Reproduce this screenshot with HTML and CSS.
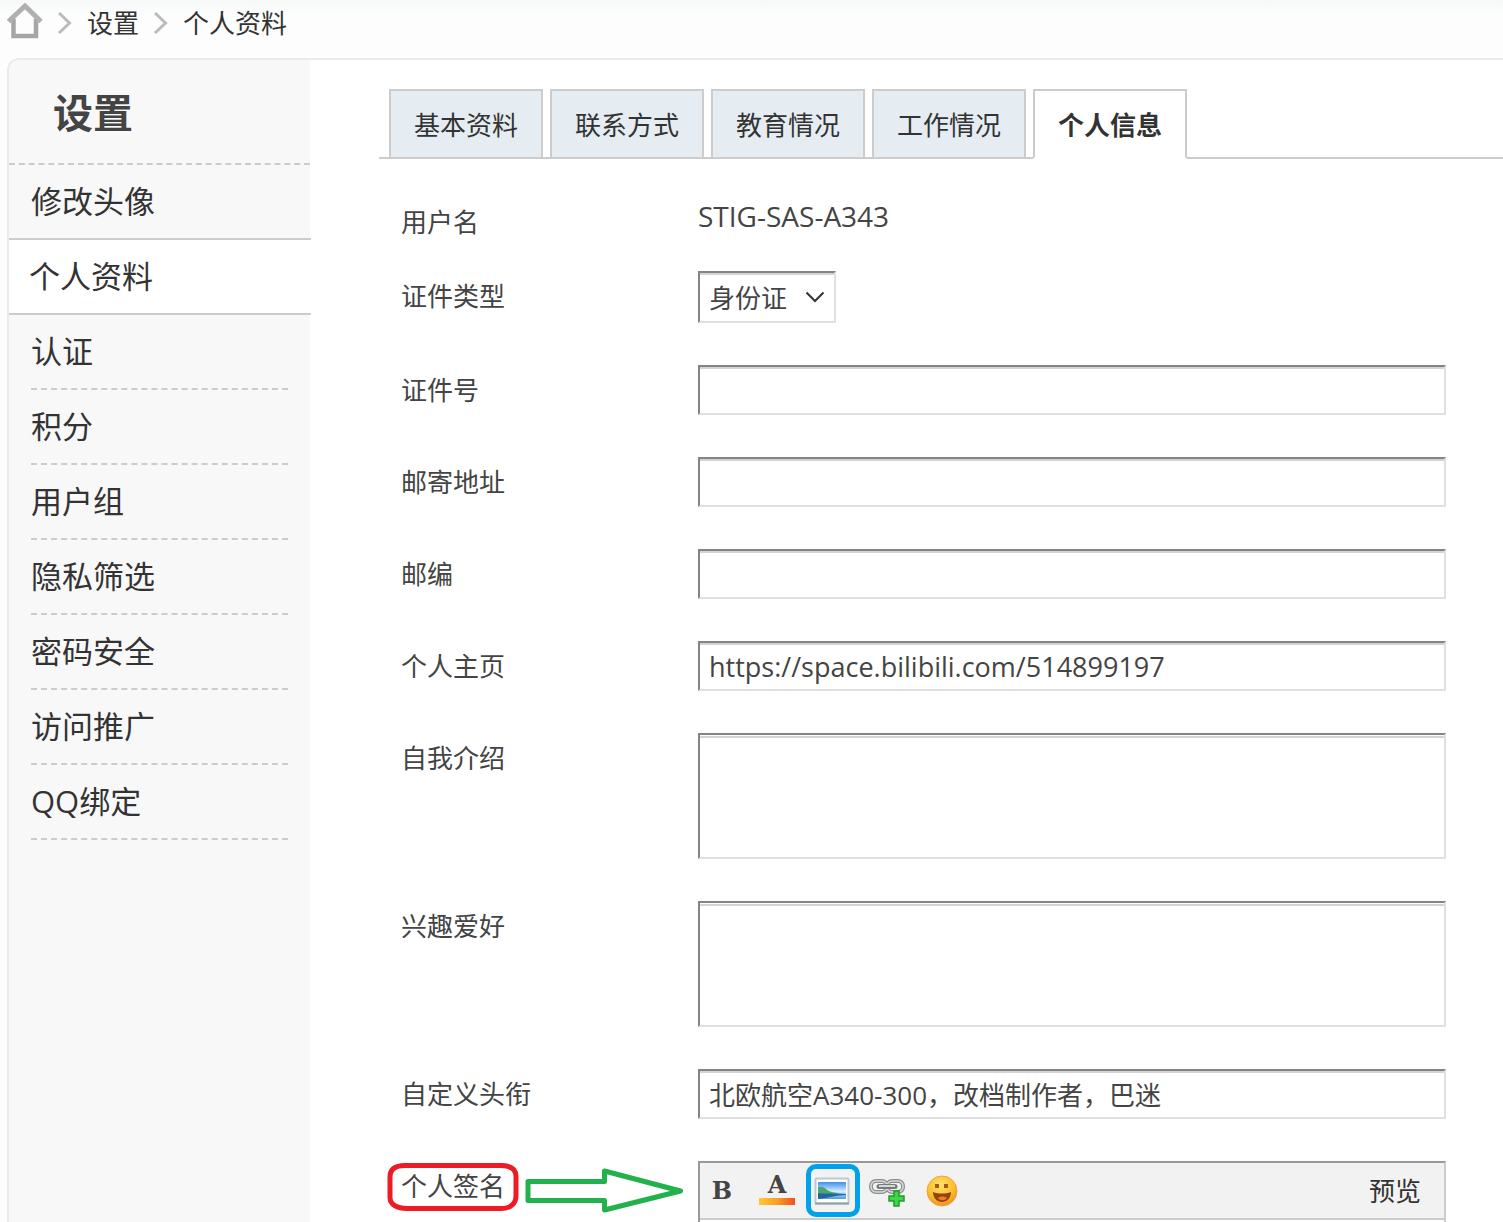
FILE: index.html
```html
<!DOCTYPE html>
<html lang="zh-CN">
<head>
<meta charset="utf-8">
<meta name="viewport" content="width=device-width, initial-scale=1">
<title>个人资料</title>
<link rel="stylesheet" href="styles.css">
</head>
<body>
<nav class="crumbs" aria-label="位置">
  <a class="home" href="#" aria-label="首页"><svg width="36" height="36" viewBox="0 0 36 36"><path d="M18 3 2 17.500h4.500V33h22.500V17.500H34z" fill="#fdfdfd"/><path d="M6.500 16v17h22.500V16" fill="none" stroke="#a6a6a6" stroke-width="4.500"/><path d="M1.500 18.500 18 3l16 15.500" fill="none" stroke="#b0b0b0" stroke-width="5"/></svg></a>
  <svg class="sep" width="14" height="22" viewBox="0 0 14 22"><path d="M1 1l10.500 10L1 21" fill="none" stroke="#bcbcbc" stroke-width="3"/></svg>
  <a href="#">设置</a>
  <svg class="sep" width="14" height="22" viewBox="0 0 14 22"><path d="M1 1l10.500 10L1 21" fill="none" stroke="#bcbcbc" stroke-width="3"/></svg>
  <a href="#">个人资料</a>
</nav>
<div class="panel">
  <aside class="side">
    <h2>设置</h2>
    <ul>
      <li><a href="#">修改头像</a></li>
      <li class="on"><a href="#">个人资料</a></li>
      <li><a href="#">认证</a></li>
      <li><a href="#">积分</a></li>
      <li><a href="#">用户组</a></li>
      <li><a href="#">隐私筛选</a></li>
      <li><a href="#">密码安全</a></li>
      <li><a href="#">访问推广</a></li>
      <li><a href="#">QQ绑定</a></li>
    </ul>
  </aside>
  <main class="main">
    <ul class="tabs">
      <li><a href="#">基本资料</a></li>
      <li><a href="#">联系方式</a></li>
      <li><a href="#">教育情况</a></li>
      <li><a href="#">工作情况</a></li>
      <li class="on"><a href="#">个人信息</a></li>
    </ul>
    <form class="form">
      <div class="row name-row"><span class="label">用户名</span><span class="value">STIG-SAS-A343</span></div>
      <div class="row">
        <label class="label" for="idtype">证件类型</label>
        <span class="select"><select id="idtype"><option>身份证</option></select><svg width="20" height="12" viewBox="0 0 20 12"><path d="M1.500 1.500 10 10l8.500-8.500" fill="none" stroke="#333" stroke-width="2"/></svg></span>
      </div>
      <div class="row"><label class="label" for="idno">证件号</label><input class="field" id="idno" type="text"></div>
      <div class="row"><label class="label" for="addr">邮寄地址</label><input class="field" id="addr" type="text"></div>
      <div class="row"><label class="label" for="zip">邮编</label><input class="field" id="zip" type="text"></div>
      <div class="row"><label class="label" for="site">个人主页</label><input class="field url" id="site" type="text" value="https://space.bilibili.com/514899197"></div>
      <div class="row"><label class="label" for="bio">自我介绍</label><textarea class="field area" id="bio"></textarea></div>
      <div class="row"><label class="label" for="hobby">兴趣爱好</label><textarea class="field area" id="hobby"></textarea></div>
      <div class="row"><label class="label" for="rank">自定义头衔</label><input class="field" id="rank" type="text" value="北欧航空A340-300，改档制作者，巴迷"></div>
      <div class="row sign-row">
        <label class="label" for="sign">个人签名</label>
        <div class="editor">
          <div class="toolbar">
            <button type="button" aria-label="粗体"><span class="bold">B</span></button>
            <button type="button" aria-label="颜色"><span class="color">A</span></button>
            <button type="button" class="marked" aria-label="图片">
              <svg width="36" height="28" viewBox="0 0 36 28">
                <defs>
                  <linearGradient id="sky" x1="0" y1="0" x2="0" y2="1"><stop offset="0" stop-color="#3f8cf0"/><stop offset=".55" stop-color="#d4efff"/><stop offset="1" stop-color="#4d9ae4"/></linearGradient>
                </defs>
                <rect x="1.500" y="1.500" width="33" height="25" rx="1" fill="#fff" stroke="#bccacb" stroke-width="2"/>
                <path d="M1 26.500h34" stroke="#8fa0a2" stroke-width="2"/>
                <rect x="4" y="5" width="28" height="17" fill="url(#sky)"/>
                <path d="M4 10c4-1 7 0 9 3 3 2 8 3 12 3l-9 2-12 2z" fill="#4fa56f"/>
                <path d="M4 16c6 1 16 0 28 1v1c-10 0-17 3-28 4z" fill="#22669a"/>
              </svg>
            </button>
            <button type="button" aria-label="链接">
              <svg width="38" height="32" viewBox="0 0 38 32">
                <g fill="none" stroke="#8b8f8f" stroke-width="4"><rect x="3" y="6" width="16" height="11" rx="5"/><rect x="19" y="6" width="16" height="11" rx="5"/></g>
                <g fill="none" stroke="#d9dcdc" stroke-width="1.500"><rect x="3" y="6" width="16" height="11" rx="5"/><rect x="19" y="6" width="16" height="11" rx="5"/></g>
                <path d="M11 11.500h16" stroke="#777b7b" stroke-width="5" stroke-linecap="round"/><path d="M11 11h16" stroke="#d5d8d8" stroke-width="2"/>
                <path d="M26 16h5v5h5v5h-5v5h-5v-5h-5v-5h5z" fill="#3fd748" stroke="#219b2b" stroke-width="1.500"/>
              </svg>
            </button>
            <button type="button" aria-label="表情">
              <svg width="32" height="32" viewBox="0 0 32 32">
                <defs><radialGradient id="face" cx=".45" cy=".3" r=".7"><stop offset="0" stop-color="#ffe46a"/><stop offset=".65" stop-color="#fcbd2c"/><stop offset="1" stop-color="#ee8f1e"/></radialGradient></defs>
                <circle cx="16" cy="16" r="15" fill="url(#face)" stroke="#efa53b"/>
                <path d="M9 9h4v4H9zM18 9h4v4h-4z" fill="#a4581a"/>
                <path d="M7 17c5 2 13 2 18 0 0 6-4 10-9 10s-9-4-9-10z" fill="#92440c"/>
                <path d="M12 23c2-2 7-2 9 0-2 3-7 3-9 0z" fill="#f17b2a"/>
              </svg>
            </button>
            <a class="preview" href="#">预览</a>
          </div>
          <textarea class="sign" id="sign"></textarea>
        </div>
        <svg class="note" width="300" height="54" viewBox="0 0 300 54" aria-hidden="true">
          <path d="M20 5.500h96c10 0 15 4 15 11v19c0 8-5 13-15 13H22c-10 0-17-4-17-11V17c0-8 5-11.500 15-11.500z" fill="none" stroke="#ed1c24" stroke-width="5"/>
          <path d="M143 21.500h76.500V11l76 20-76 19V40.500H143z" fill="none" stroke="#22b14c" stroke-width="5" stroke-linejoin="round"/>
        </svg>
      </div>
    </form>
  </main>
</div>
</body>
</html>
```
FILE: styles.css
```css
* { box-sizing: border-box; }
html { scrollbar-width: none; }
body {
  margin: 0;
  min-height: 100vh;
  display: flex;
  flex-direction: column;
  background: linear-gradient(#f7f9f9, #fdfdfd 16px);
  color: #444;
  font: 26px/50px "Open Sans", "Noto Sans CJK SC", sans-serif;
}
ul { margin: 0; padding: 0; list-style: none; }
a { color: #333; text-decoration: none; }
button, input, select, textarea { font: inherit; color: inherit; }
svg { display: block; flex: none; }

.crumbs {
  flex: none;
  display: flex;
  align-items: center;
  gap: 15px;
  height: 46px;
  margin-bottom: 12px;
  padding-left: 7px;
}
.crumbs .home { margin-top: -4px; }

.panel {
  flex: 1 0 auto;
  display: flex;
  margin-left: 7px;
  border: solid #ebebeb;
  border-width: 2px 0 0 2px;
  border-top-left-radius: 12px;
  background: #fff;
}
.side {
  flex: none;
  width: 301px;
  border-top-left-radius: 10px;
  background: #f8f8f8;
}
.side h2 {
  margin: 0;
  height: 105px;
  padding-left: 44px;
  border-bottom: 2px dashed #ccc;
  font-size: 40px;
  line-height: 106px;
}
.side li {
  height: 75px;
  margin: 0 22px;
  border-bottom: 2px dashed #ccc;
  font-size: 31px;
  line-height: 73px;
}
.side li:first-child { border-bottom-color: transparent; }
.side li.on {
  height: 77px;
  margin: -2px -1px 0 0;
  padding-left: 20px;
  border-top: 2px solid #ccc;
  border-bottom-style: solid;
  background: #fff;
}
.side a { display: block; }

.main { flex: 1; min-width: 0; padding: 29px 0 0 69px; }
.tabs {
  display: flex;
  gap: 7px;
  padding-left: 10px;
  height: 70px;
  border-bottom: 2px solid #ccc;
}
.tabs li {
  width: 154px;
  height: 70px;
  border: 2px solid #ccc;
  background: #e5edf2;
  text-align: center;
  line-height: 68px;
}
.tabs .on { border-bottom-color: #fff; background: #fff; font-weight: 700; }

.form { padding: 38px 57px 0 22px; }
.row {
  display: grid;
  grid-template-columns: 297px 1fr;
  align-items: start;
  margin-bottom: 42px;
}
.name-row { margin-bottom: 24px; }
.value { font-size: 28px; line-height: 38px; }
.field, select {
  display: block;
  width: 100%;
  height: 50px;
  margin: 0;
  padding: 2px 9px 0;
  border: 2px solid;
  border-color: #848484 #e0e0e0 #e0e0e0 #848484;
  border-radius: 0;
  outline: 0;
  background: #fff;
  box-shadow: inset 0 2px #d3d3d3;
}
.url { font-size: 27px; }
.area {
  height: 126px;
  resize: none;
  box-shadow: inset 0 1px #fff, inset 0 3px #d3d3d3;
}
.select { position: relative; width: 138px; }
select { height: 52px; padding-top: 0; appearance: none; }
.select svg { position: absolute; right: 11px; top: 20px; pointer-events: none; }

.sign-row { position: relative; margin: 0; }
.editor { border: 2px solid; border-color: #999 #ccc #ccc #999; }
.toolbar {
  display: flex;
  align-items: center;
  gap: 15px;
  height: 57px;
  padding: 0 23px 0 2px;
  border-bottom: 2px solid #ccc;
  background: #f2f2f2;
}
.toolbar button {
  display: flex;
  align-items: center;
  justify-content: center;
  width: 40px;
  height: 52px;
  padding: 0;
  border: 0;
  background: none;
}
.toolbar .marked { position: relative; }
.marked::after {
  content: "";
  position: absolute;
  inset: -1px -8px 0 -6px;
  border: 5px solid #00a2e8;
  border-radius: 10px;
}
.bold, .color { font: 700 24px/26px "DejaVu Serif", serif; color: #444; }
.color {
  width: 36px;
  margin-top: -4px;
  border-bottom: 7px solid;
  border-image: linear-gradient(90deg, #ffcb33, #f9a026, #ed4c1c) 1;
}
.preview { margin-left: auto; }
.sign { display: block; width: 100%; height: 120px; border: 0; resize: none; }
.note { position: absolute; left: -16px; top: -1px; pointer-events: none; }
```
